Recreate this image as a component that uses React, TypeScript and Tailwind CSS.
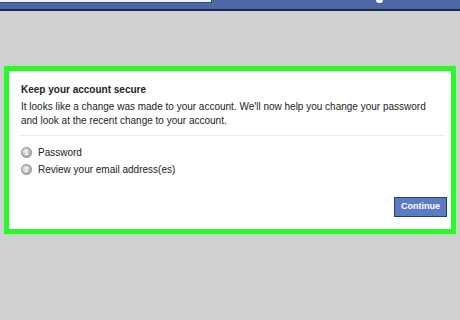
import React from "react";

function Step({ n, label }: { n: string; label: string }) {
  return (
    <div className="flex items-center h-[14px]">
      <div className="ml-[2px] w-[11px] h-[11px] rounded-full bg-[radial-gradient(circle_at_35%_35%,#e6e6e6,#9a9a9a)] border border-[#8a8a8a] flex items-center justify-center text-[7px] leading-none text-white font-bold">
        {n}
      </div>
      <span className="ml-[6px] text-[10px] text-[#222]">{label}</span>
    </div>
  );
}

export default function App() {
  return (
    <div
      className="w-[460px] h-[320px] bg-[#d0d1d3] flex flex-col overflow-hidden"
      style={{ fontFamily: '"Liberation Sans", Arial, sans-serif' }}
    >
      <div className="relative h-[11px] bg-[#4b67a8] border-b-2 border-[#1b2848] flex">
        <div className="w-[212px] h-[3px] bg-[#eef0f5] border-b border-r border-[#3a4a6e]" />
        <div className="absolute left-[376px] top-0 w-[7px] h-[3px] rounded-b-full bg-white" />
      </div>
      <div className="mt-[55px] mx-[4px] h-[168px] border-[5px] border-[#2cf72c] bg-white flex flex-col shadow-[0_0_2px_#7dff7d]">
        <div className="pt-[13px] pl-[12px] text-[10px] leading-[12px] font-bold text-[#1d1d1d]">
          Keep your account secure
        </div>
        <div className="mt-[4px] pl-[12px] text-[10px] leading-[14px] text-[#1d1d1d]">
          It looks like a change was made to your account. We'll now help you change your password
          <br />
          and look at the recent change to your account.
        </div>
        <div className="mt-[7px] ml-[11px] mr-[7px] h-px bg-[#ececec]" />
        <div className="mt-[9px] pl-[10px] flex flex-col gap-[3px]">
          <Step n="1" label="Password" />
          <Step n="2" label="Review your email address(es)" />
        </div>
        <div className="mt-[21px] flex justify-end pr-[4px]">
          <div className="w-[53px] h-[20px] bg-[#5b7bc4] border border-[#233d76] flex items-center justify-center text-[9px] font-bold text-white">
            Continue
          </div>
        </div>
      </div>
    </div>
  );
}
